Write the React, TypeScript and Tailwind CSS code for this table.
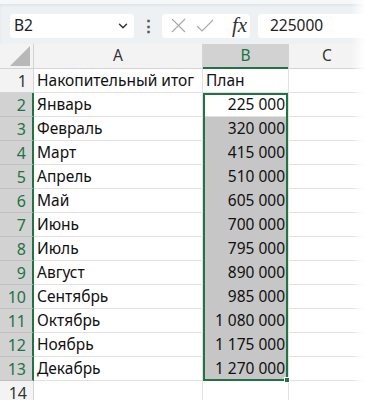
import { ChevronDown } from 'lucide-react';

const ROWS: [string, string][] = [
  ['Накопительный итог', 'План'],
  ['Январь', '225 000'],
  ['Февраль', '320 000'],
  ['Март', '415 000'],
  ['Апрель', '510 000'],
  ['Май', '605 000'],
  ['Июнь', '700 000'],
  ['Июль', '795 000'],
  ['Август', '890 000'],
  ['Сентябрь', '985 000'],
  ['Октябрь', '1 080 000'],
  ['Ноябрь', '1 175 000'],
  ['Декабрь', '1 270 000'],
  ['', ''],
];

const font = "font-['Segoe_UI','Noto_Sans','Open_Sans',sans-serif]";

export default function App() {
  return (
    <div className={`relative w-[365px] h-[400px] overflow-hidden bg-white ${font}`}>
      {/* Formula bar */}
      <div className="h-[44px] bg-[#eef1f4] border-t-[4px] border-[#f5f7f9] shadow-[inset_0_2px_3px_rgba(0,0,0,0.05)] flex items-center pl-[10px] pt-[3px]">
        <div className="w-[124px] h-[24px] bg-white rounded-[4px] flex items-center justify-between pl-[4px] pr-[4px] text-[15.5px] text-[#222]">
          <span>B2</span>
          <ChevronDown size={14} strokeWidth={2.5} className="text-[#333]" />
        </div>
        <div className="w-[28px] flex justify-center text-[#555] text-[17px] font-bold leading-none">⋮</div>
        <div className="w-[88px] h-[24px] bg-white rounded-[4px] flex items-center pl-[9px] gap-[10px]">
          <svg width="15" height="15" viewBox="0 0 15 15" fill="none" stroke="#a8a8a8" strokeWidth="1.1">
            <path d="M1 1L14 14M14 1L1 14" />
          </svg>
          <svg width="18" height="13" viewBox="0 0 18 13" fill="none" stroke="#a8a8a8" strokeWidth="1.1">
            <path d="M1 7L6 12L17 1" />
          </svg>
          <span className="ml-[8px] font-['Liberation_Serif',serif] italic text-[21px] text-[#333] leading-none">
            fx
          </span>
        </div>
        <div className="ml-[8px] flex-1 h-[24px] bg-white rounded-l-[4px] flex items-center pl-[12px] text-[15.5px] text-[#222]">
          225000
        </div>
      </div>

      {/* Column headers */}
      <div className="flex h-[25px] bg-[#f3f3f3] border-b border-[#d4d4d4] text-[15.5px] text-[#333]">
        <div className="w-[34px] border-r border-[#d4d4d4] relative">
          <div className="absolute right-[3px] bottom-[2px] w-0 h-0 border-l-[20px] border-l-transparent border-b-[20px] border-b-[#b8b8b8]" />
        </div>
        <div className="w-[169px] border-r border-[#d4d4d4] flex items-center justify-center">A</div>
        <div className="w-[85px] bg-[#d2d2d2] border-b-2 border-[#217346] -mb-px flex items-center justify-center text-[#217346]">
          B
        </div>
        <div className="w-[77px] border-l border-[#d4d4d4] flex items-center justify-center">C</div>
      </div>

      {/* Grid */}
      <div className="relative">
        {ROWS.map(([a, b], i) => {
          const n = i + 1;
          const sel = n >= 2 && n <= 13;
          const active = n === 2;
          return (
            <div key={n} className="flex h-[24px] text-[15.5px] text-[#111]">
              <div
                className={`w-[34px] border-b border-r flex items-center justify-end pr-[6px] text-[16px] ${
                  sel
                    ? 'bg-[#d2d2d2] text-[#217346] border-b-[#c0c0c0] border-r-[#217346] border-r-2'
                    : 'bg-[#f3f3f3] text-[#333] border-[#d4d4d4]'
                }`}
              >
                {n}
              </div>
              <div className="w-[169px] border-b border-r border-[#e1e1e1] flex items-center pl-[3px] whitespace-nowrap overflow-visible">
                {a}
              </div>
              <div
                className={`w-[85px] border-b flex items-center ${
                  n === 1 ? 'justify-start pl-[3px]' : 'justify-end pr-[3px]'
                } ${sel && !active ? 'bg-[#c6c6c6] border-[#c6c6c6]' : 'border-[#e1e1e1]'}`}
              >
                {b}
              </div>
              <div className="w-[77px] border-b border-l border-[#e1e1e1]" />
            </div>
          );
        })}
        {/* Selection outline */}
        <div className="absolute left-[203px] top-[24px] w-[85px] h-[288px] border-2 border-[#217346] pointer-events-none">
          <div className="absolute -right-[4px] -bottom-[4px] w-[6px] h-[6px] bg-[#217346] border border-white" />
        </div>
      </div>

      {/* right edge fade */}
      <div className="absolute top-0 right-0 w-[14px] h-full bg-gradient-to-r from-transparent to-white pointer-events-none" />
    </div>
  );
}
